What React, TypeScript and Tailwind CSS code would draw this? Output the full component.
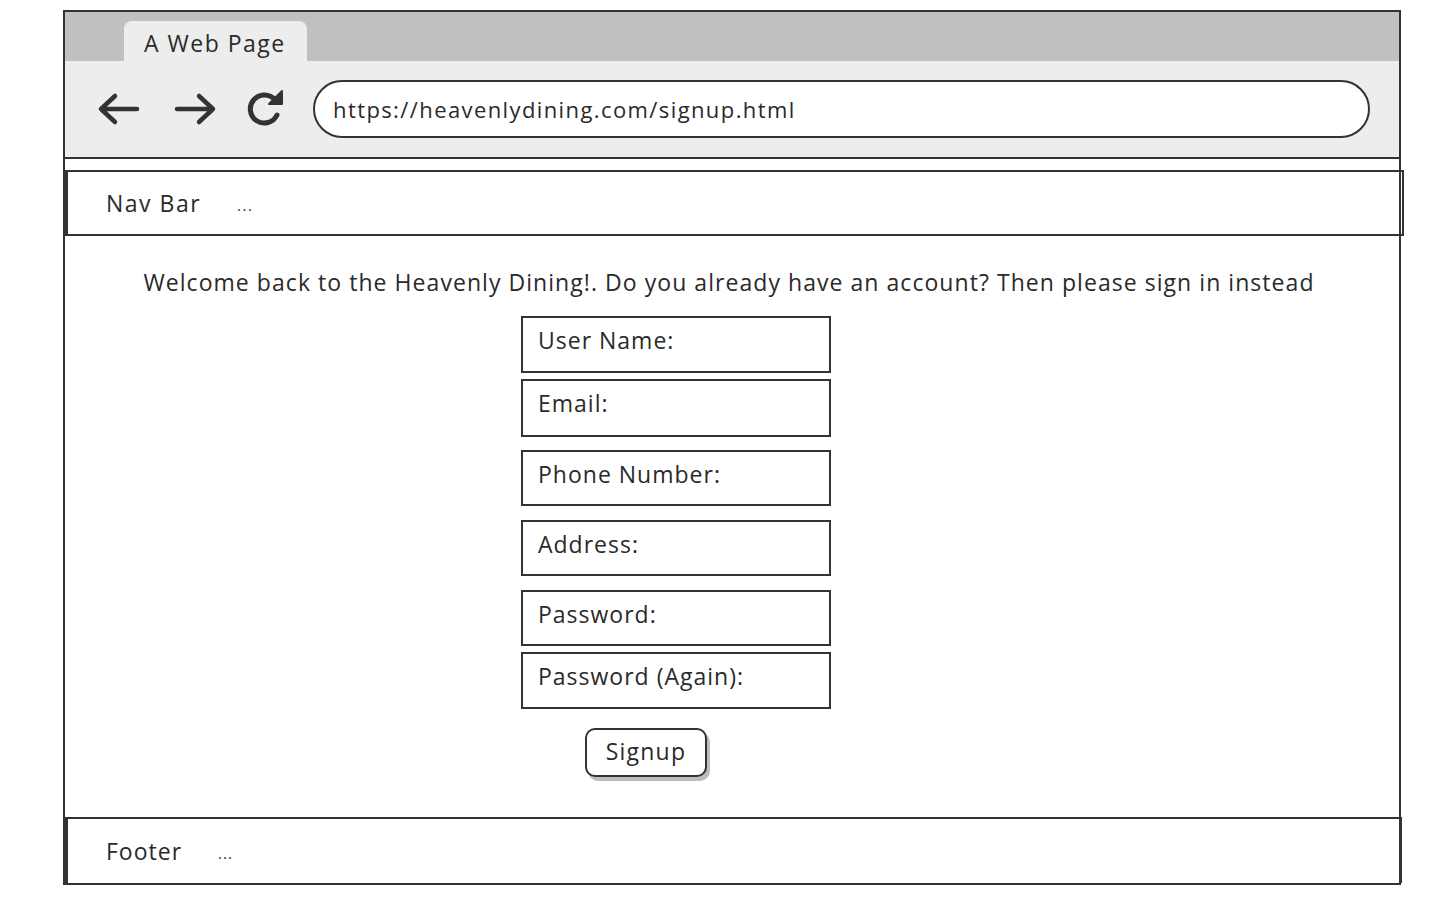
import React from "react";

const font = { fontFamily: "'Open Sans', 'Noto Sans', sans-serif" };

function Field({ label, className = "" }: { label: string; className?: string }) {
  return (
    <div
      className={`w-[310px] border-[2.5px] border-[#333] bg-white px-[15px] flex items-start pt-[5px] text-[23px] tracking-[1px] text-[#2a2a2a] ${className}`}
    >
      {label}
    </div>
  );
}

export default function App() {
  return (
    <div className="w-[1450px] h-[902px] bg-white pl-[63px] pt-[10px]" style={font}>
      <div className="w-[1338px] h-[875px] border-2 border-[#333] flex flex-col">
        {/* tab strip */}
        <div className="h-[49px] bg-[#c0c0c0] flex items-end pl-[59px]">
          <div className="h-[40px] w-[183px] bg-[#ededed] rounded-t-[8px] pl-[20px] pt-[7px] text-[23px] tracking-[1.5px] text-[#2a2a2a] leading-[30px]">
            A Web Page
          </div>
        </div>
        {/* toolbar */}
        <div className="h-[98px] bg-[#ededed] border-b-2 border-[#333] flex items-center pl-[32px] pr-[29px]">
          <svg width="44" height="34" viewBox="0 0 44 34" className="mr-[32px]">
            <path d="M40 17 H5 M18 4 L4 17 L18 30" fill="none" stroke="#333" strokeWidth="4.5" strokeLinecap="round" strokeLinejoin="round" />
          </svg>
          <svg width="44" height="34" viewBox="0 0 44 34" className="mr-[28px]">
            <path d="M4 17 H39 M26 4 L40 17 L26 30" fill="none" stroke="#333" strokeWidth="4.5" strokeLinecap="round" strokeLinejoin="round" />
          </svg>
          <svg width="40" height="38" viewBox="0 0 40 38" className="mr-[28px]">
            <path d="M30 10 A14 14 0 1 0 32 25" fill="none" stroke="#333" strokeWidth="5" strokeLinecap="round" />
            <path d="M24 14 L37 14 L37 1 Z" fill="#333" stroke="#333" strokeWidth="2" strokeLinejoin="round" />
          </svg>
          <div className="flex-1 h-[58px] bg-white border-2 border-[#333] rounded-full flex items-center pl-[18px] text-[22px] tracking-[1.4px] text-[#2a2a2a]">
            https://heavenlydining.com/signup.html
          </div>
        </div>
        {/* nav */}
        <div className="mt-[11px] h-[66px] -mr-[5px] border-2 border-l-[3px] border-[#333] flex items-center pl-[38px] text-[23px] tracking-[1.5px] text-[#2a2a2a]">
          <span>Nav Bar</span>
          <span className="ml-[36px] text-[15px] mt-[4px]">...</span>
        </div>
        {/* content */}
        <div className="flex-1 flex flex-col items-center pt-[31px]">
          <div className="text-[23px] tracking-[1.05px] text-[#2a2a2a] leading-[30px] mr-[6px]">
            Welcome back to the Heavenly Dining!. Do you already have an account? Then please sign in instead
          </div>
          <div className="flex flex-col items-start mt-[19px] mr-[112px]">
            <Field label="User Name:" className="h-[57px]" />
            <Field label="Email:" className="h-[58px] mt-[6px]" />
            <Field label="Phone Number:" className="h-[56px] mt-[13px]" />
            <Field label="Address:" className="h-[56px] mt-[14px]" />
            <Field label="Password:" className="h-[56px] mt-[14px]" />
            <Field label="Password (Again):" className="h-[57px] mt-[6px]" />
            <div className="ml-[64px] mt-[19px] w-[122px] h-[49px] border-2 border-[#333] rounded-[10px] bg-white shadow-[3px_4px_0_#bdbdbd] flex items-center justify-center pb-[3px] text-[23px] tracking-[1.2px] text-[#2a2a2a]">
              Signup
            </div>
          </div>
        </div>
        {/* footer */}
        <div className="h-[66px] -mr-[3px] border-2 border-l-[3px] border-b-0 border-[#333] flex items-center pl-[38px] text-[23px] tracking-[1px] text-[#2a2a2a]">
          <span>Footer</span>
          <span className="ml-[36px] text-[15px] mt-[4px]">...</span>
        </div>
      </div>
    </div>
  );
}
